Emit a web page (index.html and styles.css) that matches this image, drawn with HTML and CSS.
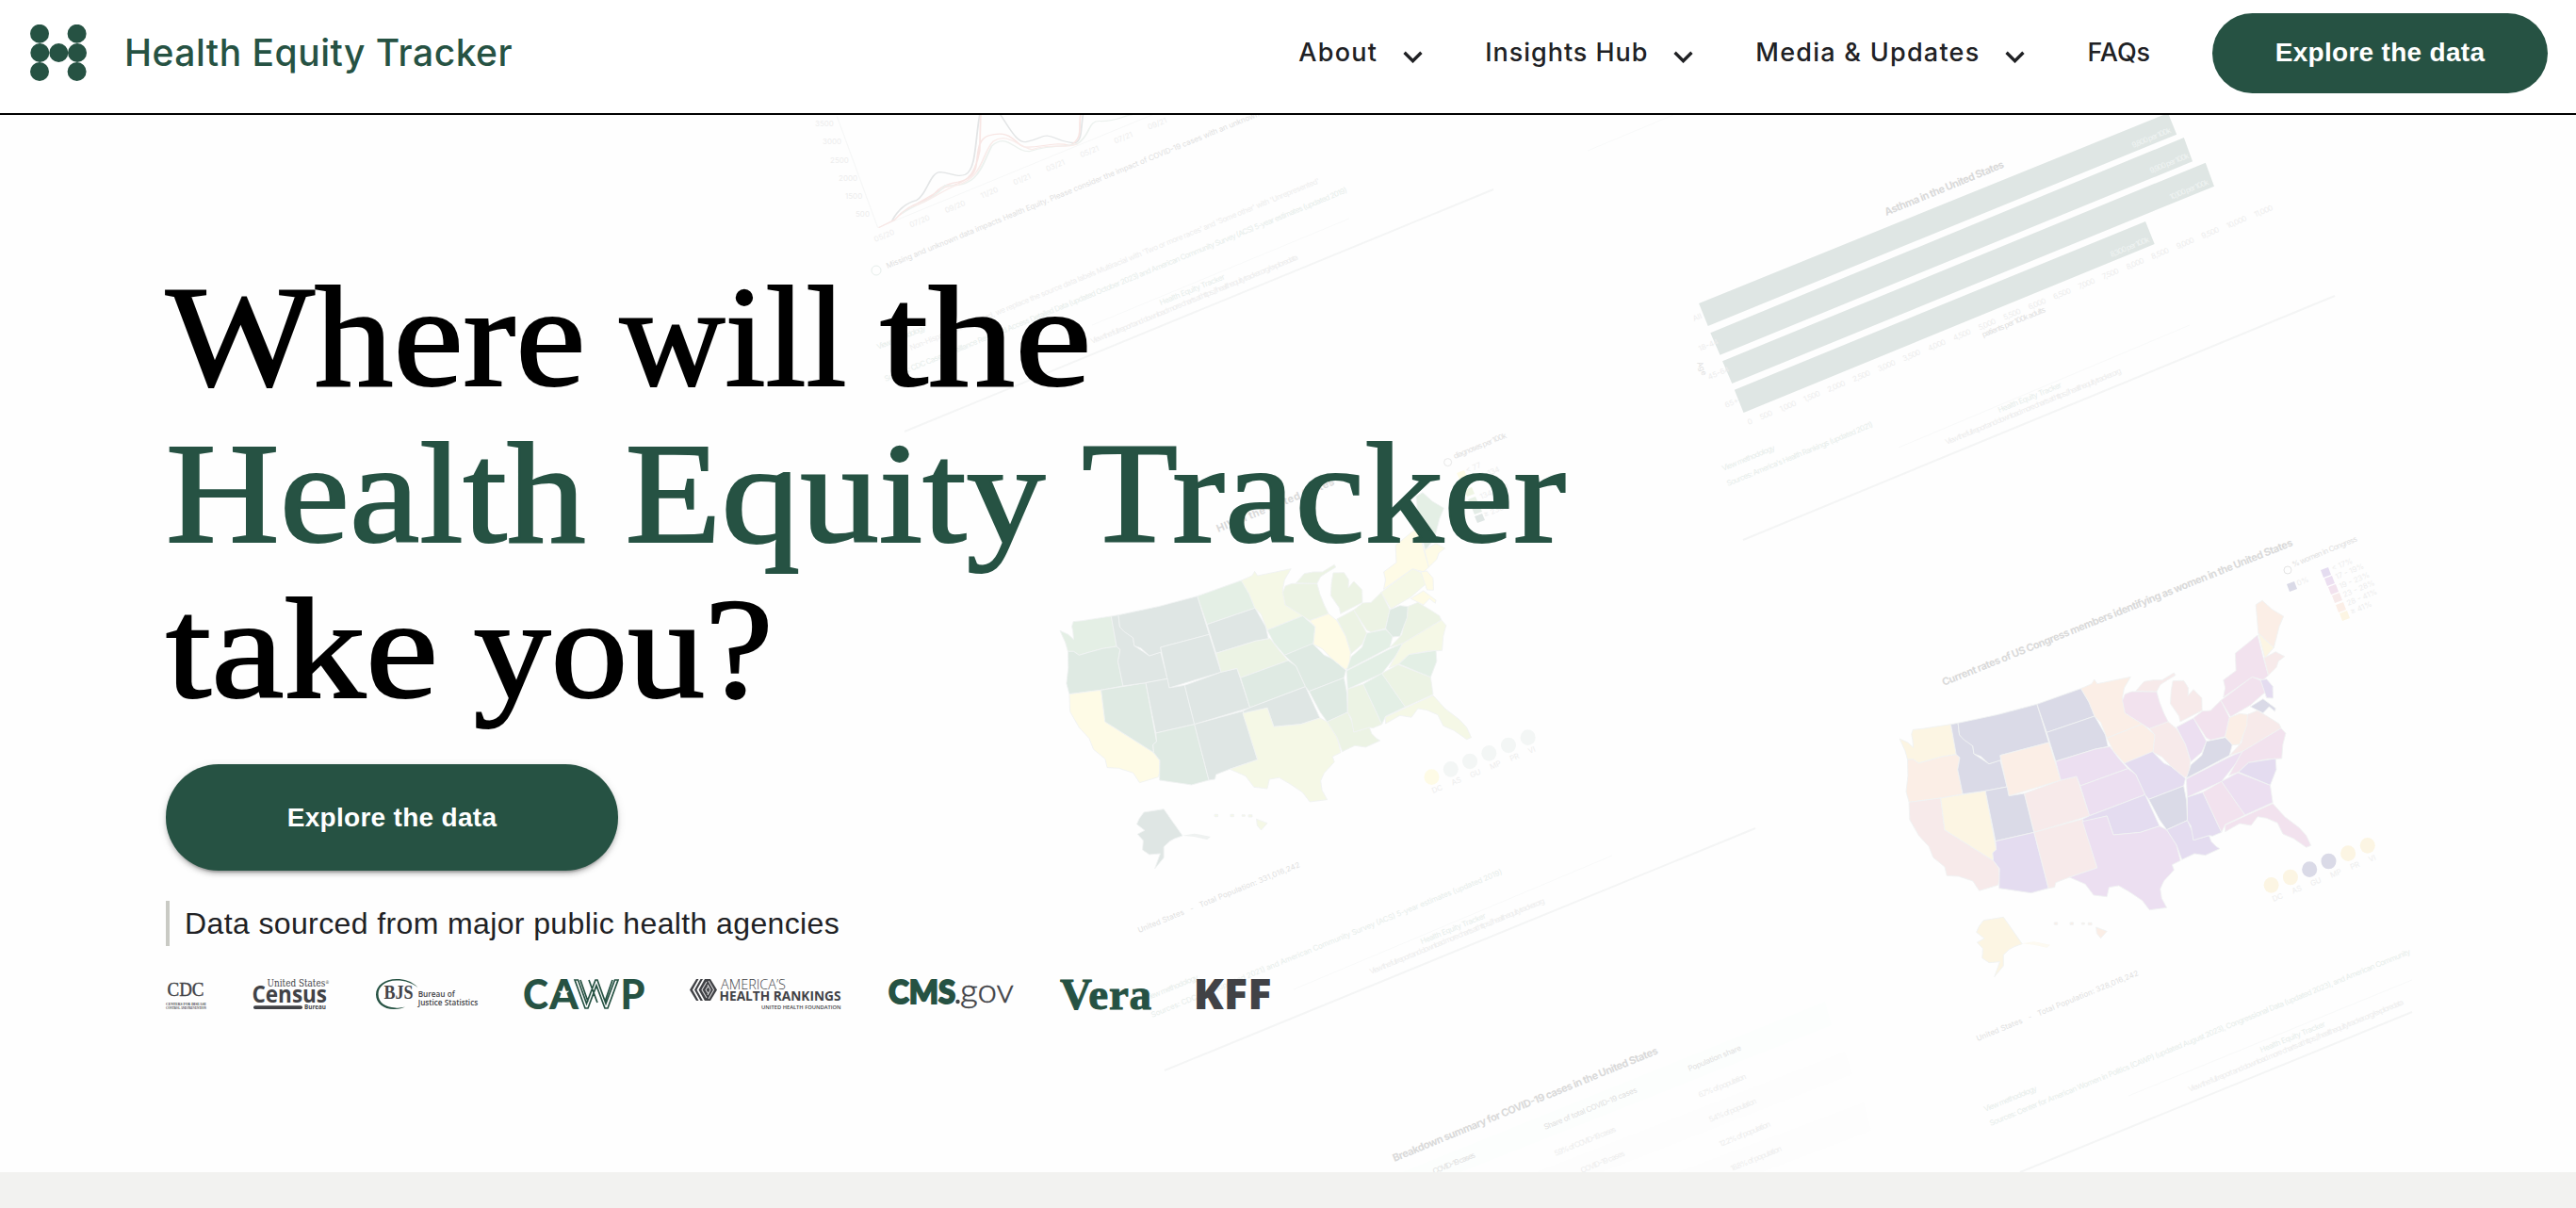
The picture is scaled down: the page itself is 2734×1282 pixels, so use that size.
FILE: index.html
```html
<!DOCTYPE html>
<html lang="en">
<head>
<meta charset="utf-8">
<title>Health Equity Tracker</title>
<link rel="stylesheet" href="styles.css">
</head>
<body>
<header class="site-header">
  <a class="brand">
    <svg class="brand-mark" width="60" height="60" viewBox="0 0 60 60">
      <circle cx="10" cy="9.8" r="10"/><circle cx="49.6" cy="9.8" r="10"/>
      <circle cx="10.3" cy="30" r="10"/><circle cx="30.3" cy="30" r="10"/><circle cx="50" cy="30" r="10"/>
      <circle cx="10" cy="50" r="10"/><circle cx="49.6" cy="50" r="10"/>
    </svg>
    <span class="brand-name">Health Equity Tracker</span>
  </a>
  <nav class="nav">
    <a class="nav-item"><span class="nav-about">About</span><svg class="chevron" viewBox="0 0 20 12"><path d="M1.5 1.5 10 10l8.500-8.500"/></svg></a>
    <a class="nav-item"><span class="nav-hub">Insights Hub</span><svg class="chevron" viewBox="0 0 20 12"><path d="M1.5 1.5 10 10l8.500-8.500"/></svg></a>
    <a class="nav-item"><span class="nav-media">Media &amp; Updates</span><svg class="chevron" viewBox="0 0 20 12"><path d="M1.5 1.5 10 10l8.500-8.500"/></svg></a>
    <a class="nav-item nav-faqs">FAQs</a>
    <a class="btn btn-nav">Explore the data</a>
  </nav>
</header>

<main class="hero">
  <svg class="backdrop" width="2734" height="1122" viewBox="0 122 2734 1122" aria-hidden="true">
    <defs>
      <g id="us-map" stroke="#f1f3f3" stroke-width="2.500" stroke-linejoin="round">
        <path fill="var(--wa)" d="M97 702 120 714 135 730 133 705 130 688 134 673 160 670 239 656 248 710 254 752 215 759 180 770 150 780 135 768 119 768 112 740Z"/>
        <path fill="var(--or)" d="M119 768 135 768 150 780 180 770 215 759 254 752 264 762 258 800 272 878 211 891 123 904 115 870 120 820Z"/>
        <path fill="var(--ca)" d="M123 904 211 891 222 992 357 1090 373 1115 374 1150 370 1168 318 1186 300 1155 260 1140 228 1138 222 1110 190 1080 178 1045 150 1010 125 960Z"/>
        <path fill="var(--nv)" d="M211 891 335 868 365 1055 355 1065 357 1090 222 992Z"/>
        <path fill="var(--id)" d="M239 656 259 652 263 690 300 725 303 750 345 782 376 770 395 855 335 868 272 878 258 800 264 762 254 752Z"/>
        <path fill="var(--mt)" d="M259 652 370 625 478 592 511 714 376 755 378 770 345 782 322 758 303 750 300 725 275 705 263 690Z"/>
        <path fill="var(--wy)" d="M376 755 511 714 544 834 400 884Z"/>
        <path fill="var(--ut)" d="M335 868 395 855 400 884 443 876 470 1000 363 1028Z"/>
        <path fill="var(--co)" d="M443 876 544 834 588 822 624 947 470 1000Z"/>
        <path fill="var(--az)" d="M363 1028 470 1000 510 1178 462 1193 373 1178 374 1115 357 1090 355 1065 365 1055Z"/>
        <path fill="var(--nm)" d="M470 1000 604 958 645 1113 568 1143 530 1160 527 1175 510 1178Z"/>
        <path fill="var(--nd)" d="M478 592 600 542 622 585 638 630 505 682Z"/>
        <path fill="var(--sd)" d="M505 682 638 630 668 690 675 727 640 735 530 774Z"/>
        <path fill="var(--ne)" d="M530 774 640 735 680 727 705 765 730 797 598 852 588 822 544 834Z"/>
        <path fill="var(--ks)" d="M598 852 730 797 752 815 778 880 624 947Z"/>
        <path fill="var(--ok)" d="M604 958 624 947 778 880 818 980 765 1000 740 1003 690 1008 672 948 608 967Z"/>
        <path fill="var(--tx)" d="M604 965 672 948 690 1008 765 1000 818 980 838 992 865 1040 876 1090 853 1103 858 1120 830 1155 820 1180 824 1210 838 1240 790 1247 770 1217 735 1190 705 1170 678 1175 672 1205 635 1200 612 1165 568 1143 645 1113Z"/>
        <path fill="var(--mn)" d="M600 542 630 527 637 513 645 527 738 505 720 540 715 570 722 620 770 655 672 700 655 650 638 630 622 585Z"/>
        <path fill="var(--ia)" d="M672 700 770 655 785 670 805 690 800 745 720 780 690 740Z"/>
        <path fill="var(--mo)" d="M720 780 798 743 830 780 850 790 890 828 885 852 788 895 778 880 752 815 735 797Z"/>
        <path fill="var(--ar)" d="M788 895 885 852 893 900 895 962 838 992 818 960Z"/>
        <path fill="var(--la)" d="M838 992 895 962 910 1000 912 1025 955 1010 962 1030 975 1045 985 1052 945 1073 915 1068 880 1087 865 1040Z"/>
        <path fill="var(--wi)" d="M722 560 740 552 810 552 818 585 830 620 842 648 790 670 770 655 722 620 715 580Z"/>
        <path fill="var(--mi)" d="M752 550 775 520 800 515 825 515 858 492 862 500 840 515 820 530 810 552Z"/>
        <path fill="var(--mi)" d="M855 518 885 517 898 540 897 565 912 545 935 572 936 612 875 648 872 630 848 590 850 550Z"/>
        <path fill="var(--il)" d="M790 670 842 648 865 670 890 720 903 770 900 820 888 825 850 790 825 760 800 745 805 690Z"/>
        <path fill="var(--in)" d="M865 665 912 636 948 710 935 745 905 775 890 720Z"/>
        <path fill="var(--oh)" d="M912 636 937 614 960 612 988 580 1012 635 1000 695 960 706 948 700Z"/>
        <path fill="var(--ky)" d="M892 828 905 785 935 755 948 710 1000 698 1020 720 1012 755Z"/>
        <path fill="var(--tn)" d="M892 830 1012 760 1048 742 1030 780 990 838 895 888Z"/>
        <path fill="var(--ms)" d="M895 888 938 872 990 1000 965 1012 955 1010 912 1025 905 980 895 962Z"/>
        <path fill="var(--al)" d="M938 872 990 838 1055 945 1000 975 990 1000Z"/>
        <path fill="var(--ga)" d="M990 838 1035 810 1125 850 1132 905 1055 945Z"/>
        <path fill="var(--fl)" d="M1000 977 1132 908 1165 950 1205 985 1225 1010 1238 1042 1225 1048 1190 1020 1160 1005 1145 970 1115 955 1090 950 1072 978 1040 972 1000 998Z"/>
        <path fill="var(--nc)" d="M1010 820 1048 742 1155 668 1168 685 1160 720 1157 765 1112 768 1065 778 1037 808Z"/>
        <path fill="var(--sc)" d="M1037 808 1065 778 1140 765 1142 800 1125 850Z"/>
        <path fill="var(--va)" d="M1012 755 1045 715 1062 625 1090 612 1130 640 1150 655 1155 668 1048 742Z"/>
        <path fill="var(--wv)" d="M1012 635 1040 622 1062 625 1060 660 1040 720 1020 722 1000 695Z"/>
        <path fill="var(--pa)" d="M988 580 1075 505 1105 520 1115 550 1070 595 1015 632Z"/>
        <path fill="var(--ny)" d="M995 515 1030 485 1028 430 1090 372 1105 440 1120 500 1105 515 1075 505 995 570 1000 540Z"/>
        <path fill="var(--nh)" d="M1092 365 1135 412 1110 445Z"/>
        <path fill="var(--me)" d="M1085 275 1103 262 1130 290 1162 312 1150 345 1135 412 1092 365Z"/>
        <path fill="var(--ma)" d="M1108 445 1140 425 1165 440 1148 455 1142 475 1120 500Z"/>
        <path fill="var(--nj)" d="M1098 515 1115 512 1132 535 1133 573 1115 572Z"/>
        <path fill="var(--md)" d="M1070 600 1105 575 1140 605 1138 615 1122 600 1105 620Z"/>
        <path fill="var(--ak)" d="M317 1300 330 1280 385 1270 437 1355 415 1364 402 1372 385 1390 385 1425 360 1460 375 1412 345 1415 326 1400 328 1370 312 1350 332 1338 310 1318Z"/>
        <path fill="var(--ak)" stroke="none" opacity=".5" d="M437 1354 470 1348 515 1358 505 1367 470 1358Z"/>
        <path fill="var(--hi)" d="M642 1302 672 1315 655 1337 644 1322ZM526 1287h9v7h-9ZM570 1287h9v7h-9ZM602 1288h8v5h-8ZM620 1288h10v7h-10Z"/>
        <g stroke="none">
          <ellipse fill="var(--i1)" cx="1128" cy="1168" rx="21" ry="25"/><ellipse fill="var(--i2)" cx="1181" cy="1143" rx="21" ry="25"/>
          <ellipse fill="var(--i3)" cx="1234" cy="1118" rx="21" ry="25"/><ellipse fill="var(--i4)" cx="1287" cy="1092" rx="21" ry="25"/>
          <ellipse fill="var(--i5)" cx="1341" cy="1067" rx="21" ry="25"/><ellipse fill="var(--i6)" cx="1395" cy="1042" rx="21" ry="25"/>
        </g>
      </g>
    </defs>

    <!-- line chart card -->
    <g transform="translate(850 120) scale(.5102 .3333)" fill="none" stroke-width="3.500">
      <path stroke="#f6f7f7" stroke-width="2.500" d="M160 365 740 0M75 10 160 365"/>
      <path stroke="#e3e5e6" d="M190 342C205 300 222 285 240 278 262 262 268 188 290 188 315 192 325 205 342 196 365 180 362 90 372 5M415 5C435 50 450 98 470 91 492 86 500 72 512 72 530 76 545 95 570 95 585 90 582 50 587 5"/>
      <path stroke="#f8e6e4" d="M162 365 195 340C230 280 255 290 275 262 300 210 330 230 350 205 378 180 355 90 390 72 440 50 445 100 465 108 500 112 520 90 560 103 590 80 576 40 582 5M205 325C240 285 265 270 300 236 340 220 360 215 372 120L374 5"/>
      <path stroke="#ecf1ee" d="M210 320C250 280 270 285 300 230 370 240 375 170 397 105 430 60 445 125 475 122 520 100 545 110 575 98 605 70 595 20 625 26 660 25 670 8 690 5"/>
      <path stroke="#f9ecea" d="M225 300C260 290 290 250 320 232 380 210 375 130 400 90 430 60 450 105 480 116 520 95 550 115 575 98"/>
    </g>
    <g class="faint">
      <text transform="translate(929 257) rotate(-22.300)" textLength="335" font-size="8" word-spacing="16">05/20 07/20 09/20 11/20 01/21 03/21 05/21 07/21 09/21</text>
      <text x="865" y="134" font-size="8">3500</text><text x="873" y="153" font-size="8">3000</text><text x="881" y="173" font-size="8">2500</text>
      <text x="890" y="192" font-size="8">2000</text><text x="897" y="211" font-size="8">1500</text><text x="908" y="230" font-size="8">500</text>
      <text class="mid" transform="translate(942 285) rotate(-22.300)" textLength="427">Missing and unknown data impacts Health Equity. Please consider the impact of COVID-19 cases with an unknown</text>
      <circle cx="930" cy="287" r="5" fill="none" stroke="#e6eeeb"/>
      <text class="green" transform="translate(932 371) rotate(-22.300)" textLength="55">View methodology</text>
      <text transform="translate(967 372) rotate(-22.300)" textLength="469">Non-Hispanic unless stated, we replace the source data labels Multiracial with 'Two or more races' and 'Some other' with 'Unrepresented'</text>
      <text class="green" transform="translate(940 405) rotate(-22.300)" textLength="530">Sources: CDC Case Surveillance Restricted Access Detailed Data (updated October 2023) and American Community Survey (ACS) 5-year estimates (updated 2019)</text>
      <text class="green" transform="translate(1232 324) rotate(-22.300)" textLength="74">Health Equity Tracker</text>
      <text transform="translate(1159 365) rotate(-22.300)" textLength="237" font-size="6">View the full report and download more charts at https://healthequitytracker.org/exploredata</text>
      <path class="rule" d="M960 458 1585 201"/><path class="rule thin" d="M1159 345 1432 232"/><path class="rule thin" d="M1685 160 1776 122"/>
    </g>

    <!-- bar chart card -->
    <g transform="translate(1750 110) scale(.5102 .3333)" fill="#dfe6e4">
      <path d="M104 636 1080 30 1098 98 123 708ZM128 730 1113 108 1131 184 148 800ZM153 820 1158 188 1176 263 173 891ZM178 911 1033 375 1052 447 197 984Z"/>
    </g>
    <g class="faint">
      <text class="strong" transform="translate(2002 229) rotate(-22.300)" textLength="136" font-size="11">Asthma in the United States</text>
      <text class="light" transform="translate(2264 157) rotate(-22.300)" textLength="44">9,800 per 100k</text>
      <text class="light" transform="translate(2283 184) rotate(-22.300)" textLength="44">9,900 per 100k</text>
      <text class="light" transform="translate(2304 212) rotate(-22.300)" textLength="44">10,100 per 100k</text>
      <text class="light" transform="translate(2241 273) rotate(-22.300)" textLength="44">8,300 per 100k</text>
      <text transform="translate(1856 451) rotate(-22.300)" textLength="602" font-size="7" word-spacing="8">0 500 1,000 1,500 2,000 2,500 3,000 3,500 4,000 4,500 5,000 5,500 6,000 6,500 7,000 7,500 8,000 8,500 9,000 9,500 10,000 11,000</text>
      <text transform="translate(1798 341) rotate(-22.300)" font-size="7">All</text><text transform="translate(1804 373) rotate(-22.300)" font-size="7">18-44</text>
      <text transform="translate(1814 403) rotate(-22.300)" font-size="7">45-64</text><text transform="translate(1832 433) rotate(-22.300)" font-size="7">65+</text>
      <text class="mid" transform="translate(1801 385) rotate(68)" font-size="7">Age</text>
      <text class="mid" transform="translate(2105 358) rotate(-22.300)" textLength="72" font-size="7">patients per 100k adults</text>
      <text class="green" transform="translate(1829 500) rotate(-22.300)" textLength="60">View methodology</text>
      <text class="green" transform="translate(1834 516) rotate(-22.300)" textLength="167">Sources: America's Health Rankings (updated 2021)</text>
      <text class="green" transform="translate(2122 438) rotate(-22.300)" textLength="72">Health Equity Tracker</text>
      <text transform="translate(2066 472) rotate(-22.300)" textLength="201" font-size="6">View the full report and download more charts at https://healthequitytracker.org</text>
      <path class="rule" d="M1850 573 2478 314"/><path class="rule thin" d="M2015 475 2324 345"/>
    </g>

    <!-- map cards -->
    <use href="#us-map" class="map-green" transform="translate(1087.850 435.300) scale(.38265 .33333)"/>
    <use href="#us-map" class="map-plum" transform="translate(1979 550) scale(.38265 .33333)"/>
    <g class="faint">
      <text class="strong" transform="translate(1293 565) rotate(-22.300)" textLength="134" font-size="11">HIV in the United States</text>
      <text class="mid" transform="translate(1544 487) rotate(-22.300)" textLength="60">diagnoses per 100k</text>
      <circle cx="1536.600" cy="490.600" r="4" fill="none" stroke="#e8e8e8"/>
      <path fill="#fefbe6" d="m1546 502 8-3 3 7-8 3Z"/><path fill="#eff5e4" d="m1554 520 8-3 3 7-8 3Z"/><path fill="#e8f1e6" d="m1558 530 8-3 3 7-8 3Z"/><path fill="#e3ece6" d="m1562 539 8-3 3 7-8 3Z"/><path fill="#dfe6e4" d="m1565 548 8-3 3 7-8 3Z"/>
      <text transform="translate(1557 502) rotate(-22.300)" font-size="6">&lt; 77</text><text transform="translate(1568 510) rotate(-22.300)" font-size="6">77-134</text><text transform="translate(1572 530) rotate(-22.300)" font-size="6">134-230</text><text transform="translate(1576 549) rotate(-22.300)" font-size="6">≥ 230</text>
      <text transform="translate(1521 842) rotate(-22.300)" textLength="118" font-size="8" word-spacing="9">DC AS GU MP PR VI</text>
      <text class="mid" transform="translate(1209 990) rotate(-22.300)" textLength="185">United States &#160; - &#160; Total Population: 331,016,242</text>
      <text class="green" transform="translate(1217 1062) rotate(-22.300)" textLength="60">View methodology</text>
      <text class="green" transform="translate(1223 1080) rotate(-22.300)" textLength="402">Sources: CDC Atlas (updated 2021) and American Community Survey (ACS) 5-year estimates (updated 2019)</text>
      <text class="green" transform="translate(1509 1002) rotate(-22.300)" textLength="74">Health Equity Tracker</text>
      <text transform="translate(1455 1034) rotate(-22.300)" textLength="200" font-size="6">View the full report and download more charts at https://healthequitytracker.org</text>
      <path class="rule" d="M1236 1136 1863 879"/><path class="rule thin" d="M1373 1050 1711 908"/>

      <text class="strong" transform="translate(2063 728) rotate(-21.900)" textLength="400" font-size="11">Current rates of US Congress members identifying as women in the United States</text>
      <text class="mid" transform="translate(2434 602) rotate(-22.300)" textLength="74">% women in Congress</text>
      <circle cx="2428" cy="605" r="4" fill="none" stroke="#e4e4e4"/>
      <path fill="#dadae7" d="m2427 620 8-3 3 8-8 3Z"/>
      <path fill="#e4dcf0" d="m2463 605 8-3 3 8-8 3Z"/><path fill="#ecdff1" d="m2467 614 8-3 3 8-8 3Z"/><path fill="#f2e2ee" d="m2471 623 8-3 3 8-8 3Z"/>
      <path fill="#f7eaea" d="m2475 632 8-3 3 8-8 3Z"/><path fill="#fbeee6" d="m2479 642 8-3 3 8-8 3Z"/><path fill="#fcf5e3" d="m2483 651 8-3 3 8-8 3Z"/>
      <text transform="translate(2439 622) rotate(-22.300)" font-size="6">0%</text>
      <text transform="translate(2476 606) rotate(-22.300)" font-size="6">&lt; 17%</text><text transform="translate(2480 615) rotate(-22.300)" font-size="6">17 - 19%</text><text transform="translate(2484 625) rotate(-22.300)" font-size="6">19 - 23%</text>
      <text transform="translate(2488 634) rotate(-22.300)" font-size="6">23 - 28%</text><text transform="translate(2492 643) rotate(-22.300)" font-size="6">28 - 41%</text><text transform="translate(2496 652) rotate(-22.300)" font-size="6">≥ 41%</text>
      <text transform="translate(2413 957) rotate(-22.300)" textLength="118" font-size="8" word-spacing="9">DC AS GU MP PR VI</text>
      <text class="mid" transform="translate(2099 1105) rotate(-22.300)" textLength="185">United States &#160; - &#160; Total Population: 328,016,242</text>
      <text class="green" transform="translate(2107 1180) rotate(-22.300)" textLength="60">View methodology</text>
      <text class="green" transform="translate(2113 1195) rotate(-22.300)" textLength="482">Sources: Center for American Women in Politics (CAWP) (updated August 2023), Congressional Data (updated 2023), and American Community</text>
      <text class="green" transform="translate(2400 1117) rotate(-22.300)" textLength="74">Health Equity Tracker</text>
      <text transform="translate(2324 1159) rotate(-22.300)" textLength="246" font-size="6">View the full report and download more charts at https://healthequitytracker.org/exploredata</text>
      <path class="rule" d="M2144 1244 2560 1074"/><path class="rule thin" d="M2259 1163 2560 1040"/>
    </g>

    <!-- table card -->
    <path fill="#fcfefd" d="M1488 1244 1937 1063 1944 1088 1550 1244Z"/>
    <path fill="#fdfdfd" d="M1630 1244 1958 1116 1966 1140 1700 1244ZM1780 1244 1978 1170 1986 1200 1870 1244Z"/>
    <g class="faint">
      <text class="strong" transform="translate(1480 1233) rotate(-22.300)" textLength="303" font-size="11">Breakdown summary for COVID-19 cases in the United States</text>
      <text class="mid" transform="translate(1522 1246) rotate(-22.300)" textLength="48">COVID-19 cases</text>
      <text class="mid" transform="translate(1640 1199) rotate(-22.300)" textLength="106">Share of total COVID-19 cases</text>
      <text class="mid" transform="translate(1793 1137) rotate(-22.300)" textLength="60">Population share</text>
      <text transform="translate(1804 1165) rotate(-22.300)" textLength="54">6.7% of population</text><text transform="translate(1815 1191) rotate(-22.300)" textLength="54">5.4% of population</text>
      <text transform="translate(1826 1217) rotate(-22.300)" textLength="58">12.2% of population</text><text transform="translate(1838 1243) rotate(-22.300)" textLength="58">18.8% of population</text>
      <text transform="translate(1651 1227) rotate(-22.300)" textLength="70">5.9% of COVID-19 cases</text><text transform="translate(1679 1245) rotate(-22.300)" textLength="50">COVID-19 cases</text>
    </g>
  </svg>

  <div class="hero-content">
    <h1 class="headline">
      <span class="line line-1">Where <span class="word word-will">will</span> <span class="word word-the">the</span></span>
      <span class="line line-2">Health Equity Tracker</span>
      <span class="line line-3"><span class="word word-take">take</span> <span class="word word-you">you?</span></span>
    </h1>
    <a class="btn btn-hero">Explore the data</a>
    <p class="sourced"><span>Data sourced from major public health agencies</span></p>
    <div class="logos">
      <svg class="cdc" width="44" height="33" viewBox="0 0 44 33">
        <text class="serif" x="1.500" y="17.700" font-size="20" textLength="39" lengthAdjust="spacingAndGlyphs" stroke="#414246" stroke-width=".4">CDC</text>
        <text class="serif" x="0" y="28" font-size="3.500" font-weight="700" textLength="43" lengthAdjust="spacingAndGlyphs">CENTERS FOR DISEASE</text>
        <text class="serif" x="0" y="32" font-size="3.500" font-weight="700" textLength="43" lengthAdjust="spacingAndGlyphs">CONTROL AND PREVENTION</text>
      </svg>
      <svg class="census" width="83" height="33" viewBox="0 0 83 33">
        <text class="slab" x="15.500" y="8.300" font-size="10.500" textLength="66" lengthAdjust="spacingAndGlyphs">United States<tspan font-size="5" dy="-3">®</tspan></text>
        <text class="open" x="-.5" y="24.500" font-size="25" font-weight="700" textLength="79.500" lengthAdjust="spacingAndGlyphs">Census</text>
        <rect x="1" y="28.300" width="52" height="3.700" rx="1.800"/>
        <text class="open" x="55" y="32" font-size="7" font-weight="700" textLength="23" lengthAdjust="spacingAndGlyphs">Bureau</text>
      </svg>
      <svg class="bjs" width="109" height="33" viewBox="0 0 109 33">
        <path fill="#265243" d="M44.500 9C38 2 30 0 22 0 9 0 0 7 0 16.500 0 26 9 32.500 20 32 25 32 28 31 31 29.500 27 30.500 24 31 20.500 30.500 10 30 2.500 25 2.500 16 2.500 8 10 1.500 22 1.500 31 1.500 38 4 44.500 9Z"/>
        <text class="serif" x="8.500" y="21" font-size="20" font-weight="700" textLength="31" lengthAdjust="spacingAndGlyphs">BJS</text>
        <text class="open" x="44.700" y="19.200" font-size="8" font-weight="600" textLength="39" lengthAdjust="spacingAndGlyphs">Bureau of</text>
        <text class="open" x="44.700" y="27.700" font-size="8" font-weight="600" textLength="63.500" lengthAdjust="spacingAndGlyphs">Justice Statistics</text>
      </svg>
      <svg class="cawp" width="128" height="33" viewBox="0 0 128 33" fill="#265243">
        <text class="lato" x="-1" y="31.500" font-size="43.500" textLength="27" lengthAdjust="spacingAndGlyphs">C</text>
        <text class="lato" x="27" y="31.500" font-size="43.500" textLength="31" lengthAdjust="spacingAndGlyphs">A</text>
        <path fill="#fff" d="m42.300 8.500 1.500 4.200h4.400l-3.500 2.700 1.300 4.300-3.700-2.600-3.700 2.600 1.300-4.300-3.500-2.700h4.400Z"/>
        <path fill="none" stroke="#265243" stroke-width="1.700" d="m54 1 11 30h3l9-24 9 24h3L100 1h-3.500L87 26 78 1h-2L66.500 26 57.500 1ZM60 1l8 23M94 1l-8 23M69 1 78 25"/>
        <text class="lato" x="102.500" y="31.500" font-size="43.500" textLength="26" lengthAdjust="spacingAndGlyphs">P</text>
      </svg>
      <svg class="ahr" width="163" height="33" viewBox="0 0 163 33">
        <path d="M7 0 0 11.500 7 23h2.500L3 11.500 9.500 0ZM11.500 0 5 11.500 11.500 23h2.500L7.500 11.500 14 0ZM16 0 9.500 11.500 16 23h6l7-11.500L22 0Z"/>
        <path fill="none" stroke="#d8d8da" stroke-width="1.100" d="m18 3-5 8.500 5 8.500M20 7l-3 4.500 3 4.500M20 2l5.500 9.500L20 21M19 6l3 5.500-3 5.500"/>
        <text class="open" x="33" y="10.500" font-size="14" font-weight="300" textLength="69" lengthAdjust="spacingAndGlyphs">AMERICA’S</text>
        <text class="open" x="31.500" y="23" font-size="14.500" font-weight="700" textLength="129" lengthAdjust="spacingAndGlyphs">HEALTH RANKINGS</text>
        <text class="open" x="76" y="31.800" font-size="6" font-weight="600" textLength="84.500" lengthAdjust="spacingAndGlyphs">UNITED HEALTH FOUNDATION</text>
      </svg>
      <svg class="cms" width="134" height="33" viewBox="0 0 134 33">
        <text class="lato" x="0" y="25.800" font-size="35" fill="#265243" stroke="#265243" stroke-width="2" textLength="71" lengthAdjust="spacingAndGlyphs">CMS</text>
        <circle cx="73.500" cy="24" r="2.200"/>
        <text class="lato-light" x="76" y="25.300" font-size="35" stroke="#414246" stroke-width=".5" textLength="57" lengthAdjust="spacingAndGlyphs">gov</text>
      </svg>
      <svg class="vera" width="97" height="33" viewBox="0 0 97 33">
        <text class="serif" x="0" y="31.500" font-size="47" font-weight="700" fill="#265243" stroke="#265243" textLength="97" lengthAdjust="spacing">Vera</text>
      </svg>
      <svg class="kff" width="80" height="33" viewBox="0 0 80 33">
        <text class="open" x="-3.500" y="32" font-size="44.500" font-weight="800" textLength="83" lengthAdjust="spacingAndGlyphs">KFF</text>
      </svg>
    </div>
  </div>
</main>
</body>
</html>
```
FILE: styles.css
```css
* { box-sizing: border-box; }
body {
  margin: 0;
  width: 2734px;
  height: 1282px;
  overflow: hidden;
  background: #f2f2f0;
  color: #202124;
  font-family: "Liberation Sans", Arial, sans-serif;
}
.site-header {
  display: flex;
  align-items: flex-start;
  justify-content: space-between;
  height: 122px;
  padding: 0 30px 0 32px;
  background: #fff;
  border-bottom: 2px solid #000;
}
.brand {
  display: flex;
  align-items: center;
  gap: 40px;
  margin-top: 26px;
  height: 60px;
}
.brand-mark { fill: #265243; }
.brand-name {
  color: #265243;
  font: 500 39px/60px Inter, sans-serif;
  letter-spacing: 0.5px;
}
.nav {
  display: flex;
  align-items: center;
  gap: 66px;
  height: 112px;
  font: 500 27px/40px Inter, sans-serif;
}
.nav-item { display: flex; align-items: center; gap: 27px; white-space: nowrap; }
.nav-about { letter-spacing: 1.3px; }
.nav-hub { letter-spacing: 0.95px; }
.nav-media { letter-spacing: 1.25px; }
.nav-faqs { letter-spacing: -0.1px; }
.chevron {
  width: 21px;
  height: 13px;
  margin-top: 9px;
  fill: none;
  stroke: #202124;
  stroke-width: 3.2;
}
.btn {
  display: flex;
  align-items: center;
  justify-content: center;
  background: #265243;
  color: #fff;
  font: 700 28px/40px "Liberation Sans", Arial, sans-serif;
  letter-spacing: 0.3px;
}
.btn-nav { width: 356px; height: 85px; border-radius: 43px; }
.hero {
  position: relative;
  height: 1122px;
  background: #fefefe;
  overflow: hidden;
}
.backdrop { position: absolute; inset: 0; }
.faint text { font-family: Inter, sans-serif; font-size: 8px; fill: #ededed; }
.faint .mid { fill: #e0e0e0; }
.faint .strong { fill: #d9d9d9; font-weight: 700; font-size: 11px; }
.faint .green { fill: #e6edea; }
.faint .light { fill: #f0f4f3; }
.rule { fill: none; stroke: #f4f5f5; stroke-width: 2; }
.rule.thin { stroke: #f8f9f9; stroke-width: 1; }

.map-green {
  --wa: #e4efe5; --or: #dfeae3; --ca: #fefbe6; --nv: #dfeae3; --id: #dfe6e4; --mt: #dfe6e4;
  --wy: #dfe6e4; --ut: #dfe6e4; --co: #dfe6e4; --az: #dfeae3; --nm: #dfe6e4; --nd: #e4efe5;
  --sd: #dfe6e4; --ne: #ecf3e4; --ks: #dfeae3; --ok: #dfe6e4; --tx: #f5f8e6; --mn: #f5f8e6;
  --ia: #e3efe5; --mo: #dfeae3; --ar: #dfeae3; --la: #ecf3e4; --wi: #ecf3e4; --mi: #ecf3e4;
  --il: #fefbe6; --in: #ecf3e4; --oh: #ecf3e4; --ky: #e3efe5; --tn: #e3efe5; --ms: #ecf3e4;
  --al: #e3efe5; --ga: #ecf3e4; --fl: #f5f8e6; --sc: #e3efe5; --nc: #f5f8e6; --va: #ecf3e4;
  --wv: #dfeae3; --pa: #f5f8e6; --ny: #fefbe6; --nh: #dfeae3; --me: #e4efe5; --ma: #fefbe6;
  --nj: #fefbe6; --md: #fefbe6; --ak: #dfe6e4; --hi: #f5f8e6;
  --i1: #fefbe6; --i2: #f3f6f5; --i3: #f3f6f5; --i4: #f3f6f5; --i5: #f3f6f5; --i6: #f3f6f5;
}
.map-plum {
  --wa: #fcf5e3; --or: #fbeee6; --ca: #f7eaea; --nv: #fcf5e3; --id: #dadae7; --mt: #dadae7;
  --wy: #fbeee6; --ut: #dadae7; --co: #f7eaea; --az: #e4dcf0; --nm: #f7eaea; --nd: #dadae7;
  --sd: #dadae7; --ne: #ecdff1; --ks: #ecdff1; --ok: #e4dcf0; --tx: #ecdff1; --mn: #fbeee6;
  --ia: #fbeee6; --mo: #e4dcf0; --ar: #dadae7; --la: #e4dcf0; --wi: #f2e2ee; --mi: #f7eaea;
  --il: #f7eaea; --in: #ecdff1; --oh: #f2e2ee; --ky: #dadae7; --tn: #ecdff1; --ms: #e4dcf0;
  --al: #f2e2ee; --ga: #ecdff1; --fl: #f2e2ee; --sc: #e4dcf0; --nc: #f2e2ee; --va: #f7eaea;
  --wv: #fbeee6; --pa: #f2e2ee; --ny: #f2e2ee; --nh: #fcf5e3; --me: #fbeee6; --ma: #f7eaea;
  --nj: #e4dcf0; --md: #dadae7; --ak: #fcf5e3; --hi: #fbeee6;
  --i1: #fcf5e3; --i2: #fcf5e3; --i3: #dadae7; --i4: #dadae7; --i5: #fcf5e3; --i6: #fcf5e3;
}

.hero-content {
  position: relative;
  display: flex;
  flex-direction: column;
  align-items: flex-start;
  padding: 154px 0 0 176px;
}
.headline {
  margin: 0;
  color: #000;
  font: 400 152px/165.5px "Liberation Serif", "Times New Roman", serif;
  -webkit-text-stroke: 2px currentColor;
}
.line {
  display: block;
  width: max-content;
  white-space: nowrap;
  transform: scaleX(1.1);
  transform-origin: 0 0;
}
.line-2 { color: #265243; }
.word { display: inline-block; transform-origin: 0 0; }
.word-will { margin: 0 -17.5px 0 -4.8px; transform: scaleX(.925); }
.word-the { margin-left: -6px; transform: scaleX(1.1); }
.word-take { margin-right: 6.3px; transform: scaleX(1.038); }
.word-you { transform: scaleX(.978); }
.btn-hero {
  width: 480px;
  height: 113px;
  margin-top: 38.5px;
  border-radius: 56px;
  box-shadow: 0 6px 2px -4px rgba(0,0,0,.2), 0 4px 4px rgba(0,0,0,.14), 0 2px 10px rgba(0,0,0,.12);
}
.sourced {
  display: flex;
  align-items: center;
  height: 48px;
  margin: 32px 0 0;
  padding-left: 16px;
  border-left: 4px solid #c9cac4;
  font-size: 32px;
  line-height: 48px;
  letter-spacing: 0.38px;
}
.logos { display: flex; gap: 48px; margin-top: 35px; height: 33px; fill: #414246; }
.logos svg { overflow: visible; }
.serif { font-family: "Liberation Serif", serif; }
.slab { font-family: "DejaVu Serif", serif; }
.open { font-family: "Open Sans", sans-serif; }
.lato { font-family: Lato, sans-serif; font-weight: 900; }
.lato-light { font-family: Lato, sans-serif; font-weight: 300; }
```
